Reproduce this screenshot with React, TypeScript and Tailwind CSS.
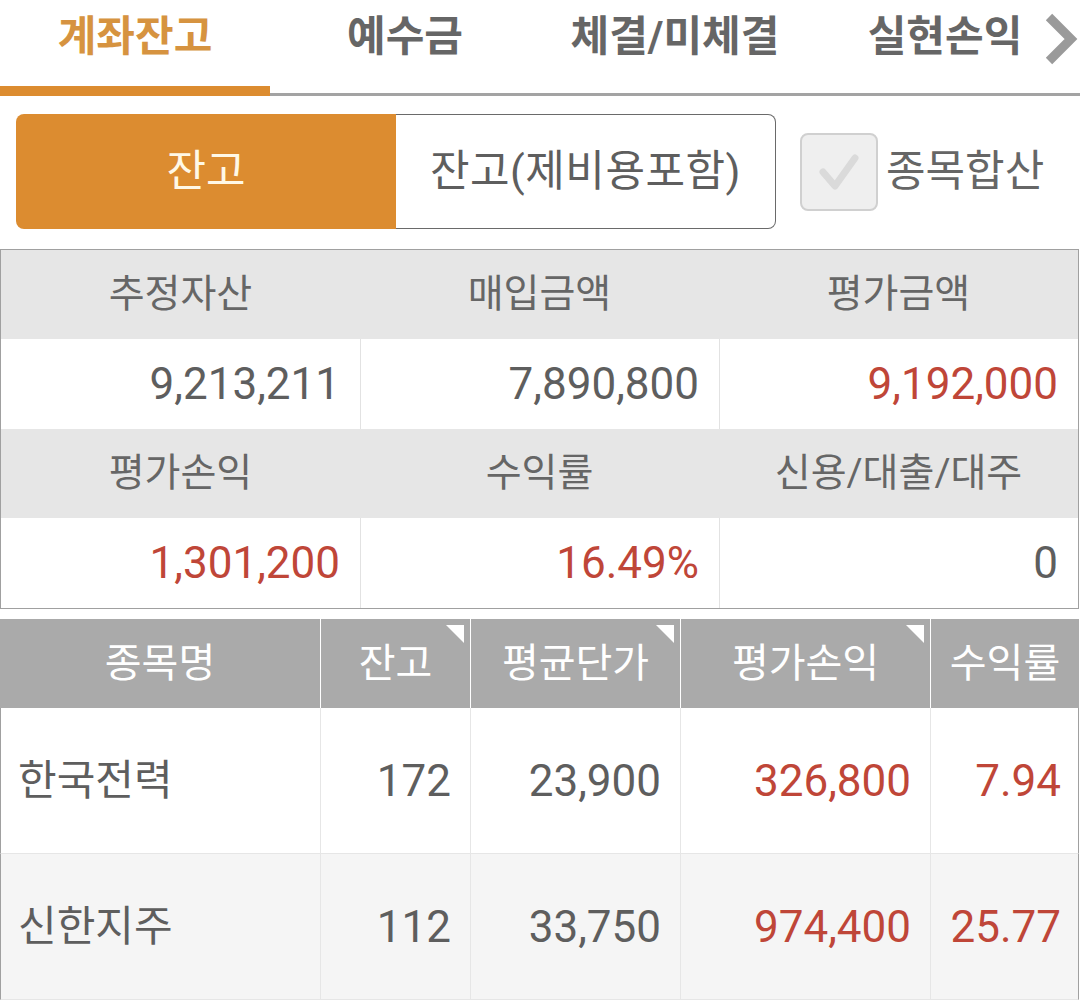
const font = { fontFamily: "Roboto, 'Noto Sans CJK KR', sans-serif" }

const tabs = ['계좌잔고', '예수금', '체결/미체결', '실현손익']

const summary = [
  [
    { label: '추정자산', value: '9,213,211', red: false },
    { label: '매입금액', value: '7,890,800', red: false },
    { label: '평가금액', value: '9,192,000', red: true },
  ],
  [
    { label: '평가손익', value: '1,301,200', red: true },
    { label: '수익률', value: '16.49%', red: true },
    { label: '신용/대출/대주', value: '0', red: false },
  ],
]

const columns = [
  { label: '종목명', width: 'w-[320px]', sort: false },
  { label: '잔고', width: 'w-[150px]', sort: true },
  { label: '평균단가', width: 'w-[210px]', sort: true },
  { label: '평가손익', width: 'w-[250px]', sort: true },
  { label: '수익률', width: 'flex-1', sort: false },
]

const stocks = [
  { name: '한국전력', qty: '172', avg: '23,900', pl: '326,800', rate: '7.94' },
  { name: '신한지주', qty: '112', avg: '33,750', pl: '974,400', rate: '25.77' },
]

function TabBar() {
  return (
    <div className="relative flex h-[96px] border-b-[3px] border-[#a3a3a3]">
      {tabs.map((tab, i) => (
        <div
          key={tab}
          className={`w-[270px] pt-[13px] text-center text-[42px] font-bold leading-[48px] ${
            i === 0 ? 'text-[#d69340]' : 'text-[#666666]'
          }`}
        >
          {tab}
        </div>
      ))}
      <div className="absolute bottom-[-3px] left-0 h-[10px] w-[270px] bg-[#dc8c30]" />
      <svg className="absolute left-[1044px] top-[13px]" width="34" height="52" viewBox="0 0 34 52">
        <polyline points="5,4 27,26 5,48" fill="none" stroke="#9a9a9a" strokeWidth="9" />
      </svg>
    </div>
  )
}

function Toolbar() {
  return (
    <div className="flex items-center pl-[16px] pt-[18px]">
      <div className="flex h-[115px] w-[760px]">
        <div className="flex w-[380px] items-center justify-center rounded-l-[8px] bg-[#dc8c30] text-[43px] text-[#fff8e6]">
          잔고
        </div>
        <div className="flex w-[380px] items-center justify-center rounded-r-[8px] border border-l-0 border-[#6a6a6a] text-[43px] tracking-[0.5px] text-[#5e5e5e]">
          잔고(제비용포함)
        </div>
      </div>
      <div className="ml-[24px] flex h-[78px] w-[78px] items-center justify-center rounded-[8px] border-2 border-[#d0d0d0] bg-[#efefef]">
        <svg width="44" height="44" viewBox="0 0 44 44">
          <polyline points="6,22 18,36 38,8" fill="none" stroke="#dadada" strokeWidth="7" strokeLinecap="round" strokeLinejoin="round" />
        </svg>
      </div>
      <span className="ml-[8px] text-[43px] text-[#666666]">종목합산</span>
    </div>
  )
}

function Summary() {
  return (
    <div className="mt-[20px] w-[1079px] border border-[#a0a0a0]">
      {summary.map((row, r) => (
        <div key={r}>
          <div className="flex h-[89px] bg-[#e6e6e6]">
            {row.map((c) => (
              <div key={c.label} className="flex w-1/3 items-center justify-center text-[39px] text-[#666666]">
                {c.label}
              </div>
            ))}
          </div>
          <div className="flex h-[90px] bg-white">
            {row.map((c, i) => (
              <div
                key={c.label}
                className={`flex w-1/3 items-center justify-end pr-[20px] text-[44px] ${
                  c.red ? 'text-[#bf4638]' : 'text-[#5e5e5e]'
                } ${i > 0 ? 'border-l border-[#e2e2e2]' : ''}`}
              >
                {c.value}
              </div>
            ))}
          </div>
        </div>
      ))}
    </div>
  )
}

function StockTable() {
  return (
    <div className="mt-[10px] w-[1079px]">
      <div className="flex h-[89px] bg-[#aaaaaa]">
        {columns.map((col, i) => (
          <div
            key={col.label}
            className={`relative flex ${col.width} items-center justify-center text-[40px] text-white ${
              i > 0 ? 'border-l border-white' : ''
            }`}
          >
            {col.label}
            {col.sort && (
              <svg className="absolute right-[6px] top-[6px]" width="18" height="18" viewBox="0 0 18 18">
                <polygon points="0,0 18,0 18,18" fill="#ffffff" />
              </svg>
            )}
          </div>
        ))}
      </div>
      {stocks.map((s, r) => (
        <div
          key={s.name}
          className={`flex h-[146px] border-l border-r border-b border-l-[#a0a0a0] border-r-[#a0a0a0] border-b-[#e6e6e6] ${
            r === 1 ? 'bg-[#f5f5f5]' : 'bg-white'
          }`}
        >
          <div className="flex w-[319px] items-center pl-[17px] text-[42px] text-[#5e5e5e]">{s.name}</div>
          <div className="flex w-[150px] items-center justify-end border-l border-[#e6e6e6] pr-[19px] text-[44px] text-[#5e5e5e]">
            {s.qty}
          </div>
          <div className="flex w-[210px] items-center justify-end border-l border-[#e6e6e6] pr-[19px] text-[44px] text-[#5e5e5e]">
            {s.avg}
          </div>
          <div className="flex w-[250px] items-center justify-end border-l border-[#e6e6e6] pr-[19px] text-[44px] text-[#bf4638]">
            {s.pl}
          </div>
          <div className="flex flex-1 items-center justify-end border-l border-[#e6e6e6] pr-[17px] text-[44px] text-[#bf4638]">
            {s.rate}
          </div>
        </div>
      ))}
    </div>
  )
}

export default function App() {
  return (
    <div className="h-[1003px] w-[1080px] overflow-hidden bg-white" style={font}>
      <TabBar />
      <Toolbar />
      <Summary />
      <StockTable />
    </div>
  )
}
